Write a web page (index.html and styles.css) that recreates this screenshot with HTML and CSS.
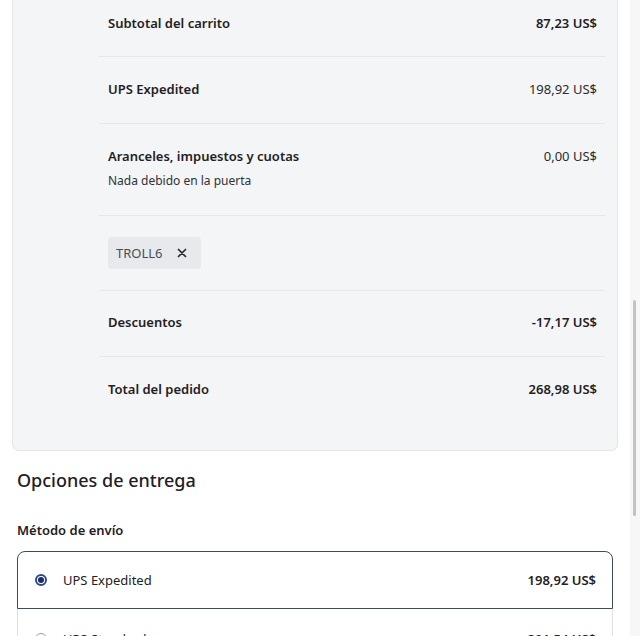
FILE: index.html
```html
<!DOCTYPE html>
<html lang="es">
<head>
<meta charset="utf-8">
<link rel="stylesheet" href="styles.css">
</head>
<body>
<div class="page">
  <main class="main">
    <section class="card">
      <div class="rows">
        <div class="row first">
          <span class="label strong">Subtotal del carrito</span>
          <span class="value strong">87,23 US$</span>
        </div>
        <div class="row">
          <span class="label strong">UPS Expedited</span>
          <span class="value">198,92 US$</span>
        </div>
        <div class="row top">
          <div class="stack">
            <span class="label strong">Aranceles, impuestos y cuotas</span>
            <span class="sub">Nada debido en la puerta</span>
          </div>
          <span class="value">0,00 US$</span>
        </div>
        <div class="row chiprow">
          <span class="chip">TROLL6
            <svg class="x" viewBox="0 0 10 10" width="10" height="10"><path d="M1.5 1.5 L8.5 8.5 M8.5 1.5 L1.5 8.5" stroke="#2a2a2a" stroke-width="1.7" stroke-linecap="round"/></svg>
          </span>
        </div>
        <div class="row discount">
          <span class="label strong">Descuentos</span>
          <span class="value strong">-17,17 US$</span>
        </div>
        <div class="row last">
          <span class="label strong">Total del pedido</span>
          <span class="value strong">268,98 US$</span>
        </div>
      </div>
    </section>

    <h2 class="heading">Opciones de entrega</h2>
    <h3 class="subheading">Método de envío</h3>

    <div class="options">
      <div class="option selected">
        <span class="radio on"></span>
        <span class="opt-name">UPS Expedited</span>
        <span class="opt-price">198,92 US$</span>
      </div>
      <div class="option">
        <span class="radio"></span>
        <span class="opt-name">UPS Standard</span>
        <span class="opt-price">201,54 US$</span>
      </div>
    </div>
  </main>
  <div class="scrollbar"><div class="thumb"></div></div>
</div>
</body>
</html>
```

FILE: styles.css
```css
html, body {
  margin: 0;
  padding: 0;
  height: 636px;
  overflow: hidden;
  background: #ffffff;
}
body {
  font-family: "Noto Sans", "Open Sans", sans-serif;
  color: #1f2124;
  font-size: 13px;
}
.page {
  display: flex;
  width: 640px;
  height: 636px;
}
.main {
  width: 630px;
  flex: none;
}
.card {
  margin: 0 12px;
  background: #f4f5f6;
  border: 1px solid #e4e5e7;
  border-top: none;
  border-radius: 0 0 7px 7px;
  padding: 0 12px 27px 86px;
}
.row {
  display: flex;
  justify-content: space-between;
  align-items: center;
  padding: 22px 8px 24px 9px;
  border-bottom: 1px solid #e6e7e9;
  line-height: 20px;
}
.row.first { padding-top: 13px; padding-bottom: 23px; }
.row.discount { padding-top: 21px; }
.row.last { border-bottom: none; }
.row.top { align-items: flex-start; padding: 22px 8px 23px 9px; }
.stack { display: flex; flex-direction: column; }
.label.strong, .value.strong { font-weight: 600; }
.label { font-size: 13px; }
.value { font-size: 13px; color: #2a2c30; }
.value.strong { color: #1f2124; }
.sub {
  font-size: 12px;
  line-height: 22px;
  margin-top: 4px;
  color: #2f3236;
}
.row.chiprow { padding: 21px 8px 21px 9px; }
.chip {
  display: inline-flex;
  align-items: center;
  height: 32px;
  padding: 0 14px 0 8px;
  background: #e7e9ec;
  border-radius: 4px;
  font-size: 13px;
  color: #4a4d52;
  box-sizing: border-box;
}
.chip .x { margin-left: 14px; }
.heading {
  margin: 15px 0 0 17px;
  font-size: 18px;
  line-height: 28px;
  font-weight: 500;
  color: #1f2124;
}
.subheading {
  margin: 26px 0 0 17px;
  font-size: 13px;
  line-height: 20px;
  font-weight: 600;
}
.options {
  margin: 11px 17px 0 17px;
}
.option {
  display: flex;
  align-items: center;
  height: 58px;
  box-sizing: border-box;
  padding: 0 16px 0 17px;
  border: 1px solid #dfe1e4;
  border-top: none;
}
.option.selected {
  border: 1px solid #3b4d5c;
  border-radius: 8px 8px 0 0;
  background: #ffffff;
}
.radio {
  width: 12px;
  height: 12px;
  border-radius: 50%;
  border: 1.5px solid #9a9da3;
  box-sizing: border-box;
  flex: none;
  position: relative;
}
.radio.on {
  border: 2px solid #2a4b8f;
}
.radio.on::after {
  content: "";
  position: absolute;
  left: 1px;
  top: 1px;
  width: 6px;
  height: 6px;
  border-radius: 50%;
  background: #1a2d66;
}
.opt-name {
  margin-left: 16px;
  flex: 1;
}
.opt-price {
  font-weight: 600;
}
.option:not(.selected) { padding-top: 2px; }
.scrollbar {
  width: 10px;
  flex: none;
  background: #f7f7f7;
  position: relative;
}
.thumb {
  position: absolute;
  left: 3px;
  top: 300px;
  width: 3px;
  height: 216px;
  background: #c3c3c3;
  border-radius: 2px;
}
```
